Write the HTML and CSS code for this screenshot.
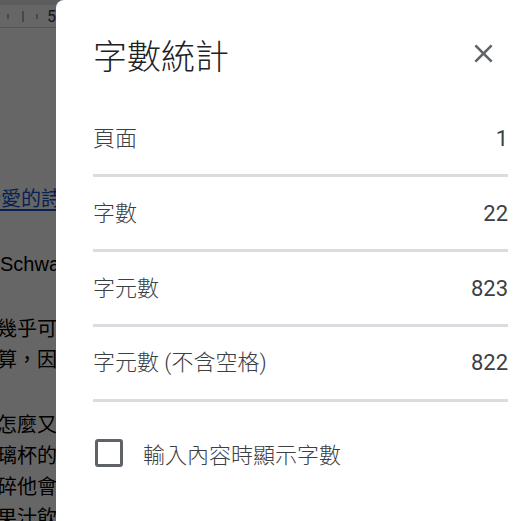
FILE: index.html
```html
<!DOCTYPE html>
<html lang="zh-Hant">
<head>
    <meta charset="UTF-8">
    <meta name="viewport" content="width=device-width, initial-scale=1.0">
    <title>字數統計</title>
    <link rel="stylesheet" href="styles.css">
</head>
<body>
    <div class="doc">
        <div class="doc-top"></div>
        <div class="ruler">
            <span class="tick"></span>
            <span class="tick long"></span>
            <span class="tick"></span>
            <span class="ruler-num">5</span>
        </div>
        <div class="page">
            <p class="line link-line"><a href="#">戀愛的詩</a></p>
            <p class="line latin gap">Schwartz</p>
            <p class="line gap">幾乎可以</p>
            <p class="line">算，因為</p>
            <p class="line gap">怎麼又是</p>
            <p class="line">璃杯的水</p>
            <p class="line">碎他會說</p>
            <p class="line">果汁飲料</p>
        </div>
    </div>

    <div class="scrim"></div>

    <div class="dialog">
        <div class="dialog-header">
            <h1 class="dialog-title">字數統計</h1>
            <button class="close-btn" aria-label="關閉">
                <svg viewBox="0 0 24 24" width="31" height="31">
                    <path d="M19 6.41L17.59 5 12 10.59 6.41 5 5 6.41 10.59 12 5 17.59 6.41 19 12 13.41 17.59 19 19 17.59 13.41 12z"/>
                </svg>
            </button>
        </div>
        <div class="stats">
            <div class="stat-row"><span class="stat-label">頁面</span><span class="stat-value">1</span></div>
            <div class="stat-row"><span class="stat-label">字數</span><span class="stat-value">22</span></div>
            <div class="stat-row"><span class="stat-label">字元數</span><span class="stat-value">823</span></div>
            <div class="stat-row"><span class="stat-label">字元數 (不含空格)</span><span class="stat-value">822</span></div>
        </div>
        <label class="check-row">
            <span class="checkbox"></span>
            <span class="check-label">輸入內容時顯示字數</span>
        </label>
    </div>
</body>
</html>
```

FILE: styles.css
```css
body {
    margin: 0;
    padding: 0;
    width: 529px;
    height: 521px;
    overflow: hidden;
    position: relative;
    background: #fff;
    font-family: "Liberation Sans", "Noto Sans CJK TC", sans-serif;
}

/* document behind the dialog */
.doc {
    height: 100%;
}
.doc-top {
    height: 5px;
    background: #e6e9ee;
}
.ruler {
    height: 22px;
    background: #fff;
    border-bottom: 1px solid #d8d8d8;
    display: flex;
    align-items: center;
    padding-left: 7px;
}
.tick {
    width: 2px;
    height: 5px;
    background: #b5b5b5;
    margin-right: 13px;
}
.tick.long {
    height: 11px;
    margin-right: 12px;
}
.ruler-num {
    margin-left: -4px;
    font-family: Roboto, sans-serif;
    font-size: 16px;
    color: #2b3a67;
}
.page {
    padding-top: 156px;
    font-size: 20px;
    line-height: 31px;
    color: #000;
}
.line {
    margin: 0;
    margin-left: -3px;
    white-space: nowrap;
}
.line.gap {
    margin-top: 34px;
}
.link-line {
    margin-left: -19px;
}
.link-line a {
    color: #1155cc;
    text-decoration: underline;
    text-underline-offset: 3px;
}
.line.latin {
    margin-left: 0;
}

.scrim {
    position: absolute;
    inset: 0;
    background: rgba(0, 0, 0, 0.6);
}

/* word count dialog */
.dialog {
    position: absolute;
    left: 56px;
    top: 0;
    right: 0;
    bottom: 0;
    background: #fff;
    border-top-left-radius: 8px;
    padding: 29px 21px 0 37px;
    font-family: Roboto, "Noto Sans CJK TC", sans-serif;
}
.dialog-header {
    display: flex;
    justify-content: space-between;
    align-items: flex-start;
}
.dialog-title {
    margin: 4px 0 0 0;
    font-size: 34px;
    line-height: 48px;
    font-weight: 300;
    color: #202124;
}
.close-btn {
    width: 48px;
    height: 48px;
    border: none;
    background: none;
    padding: 0;
    margin-right: 1px;
    display: flex;
    align-items: center;
    justify-content: center;
    fill: #5f6368;
    cursor: pointer;
}
.stats {
    margin-top: 21px;
}
.stat-row {
    display: flex;
    justify-content: space-between;
    padding: 22px 0 20px;
    line-height: 30px;
    font-size: 22px;
    color: #3c4043;
    border-bottom: 3px solid #dadce0;
}
.stat-row:last-child {
    padding-top: 21px;
    padding-bottom: 21px;
}
.stat-label {
    font-weight: 300;
}
.stat-value {
    font-weight: 400;
}
.check-row {
    display: flex;
    align-items: center;
    margin-top: 35px;
    cursor: pointer;
}
.checkbox {
    width: 22px;
    height: 22px;
    border: 3px solid #5f6368;
    border-radius: 3px;
    margin-left: 2px;
    flex-shrink: 0;
}
.check-label {
    margin-left: 20px;
    font-size: 22px;
    font-weight: 300;
    color: #3c4043;
}
```
